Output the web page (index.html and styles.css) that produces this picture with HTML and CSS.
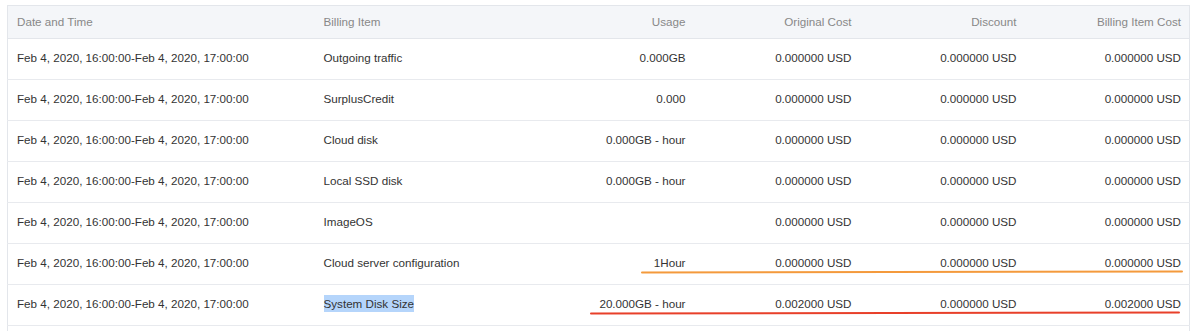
FILE: index.html
```html
<!DOCTYPE html>
<html lang="en">
<head>
    <meta charset="UTF-8">
    <title>Billing Details</title>
    <link rel="stylesheet" href="styles.css">
</head>
<body>
    <div class="bill-wrap">
        <table class="bill-table">
            <colgroup>
                <col class="c-date">
                <col class="c-item">
                <col class="c-usage">
                <col class="c-orig">
                <col class="c-disc">
                <col class="c-cost">
            </colgroup>
            <thead>
                <tr>
                    <th>Date and Time</th>
                    <th>Billing Item</th>
                    <th class="num">Usage</th>
                    <th class="num">Original Cost</th>
                    <th class="num">Discount</th>
                    <th class="num">Billing Item Cost</th>
                </tr>
            </thead>
            <tbody>
                <tr>
                    <td>Feb 4, 2020, 16:00:00-Feb 4, 2020, 17:00:00</td>
                    <td>Outgoing traffic</td>
                    <td class="num">0.000GB</td>
                    <td class="num">0.000000 USD</td>
                    <td class="num">0.000000 USD</td>
                    <td class="num">0.000000 USD</td>
                </tr>
                <tr>
                    <td>Feb 4, 2020, 16:00:00-Feb 4, 2020, 17:00:00</td>
                    <td>SurplusCredit</td>
                    <td class="num">0.000</td>
                    <td class="num">0.000000 USD</td>
                    <td class="num">0.000000 USD</td>
                    <td class="num">0.000000 USD</td>
                </tr>
                <tr>
                    <td>Feb 4, 2020, 16:00:00-Feb 4, 2020, 17:00:00</td>
                    <td>Cloud disk</td>
                    <td class="num">0.000GB - hour</td>
                    <td class="num">0.000000 USD</td>
                    <td class="num">0.000000 USD</td>
                    <td class="num">0.000000 USD</td>
                </tr>
                <tr>
                    <td>Feb 4, 2020, 16:00:00-Feb 4, 2020, 17:00:00</td>
                    <td>Local SSD disk</td>
                    <td class="num">0.000GB - hour</td>
                    <td class="num">0.000000 USD</td>
                    <td class="num">0.000000 USD</td>
                    <td class="num">0.000000 USD</td>
                </tr>
                <tr>
                    <td>Feb 4, 2020, 16:00:00-Feb 4, 2020, 17:00:00</td>
                    <td>ImageOS</td>
                    <td class="num"></td>
                    <td class="num">0.000000 USD</td>
                    <td class="num">0.000000 USD</td>
                    <td class="num">0.000000 USD</td>
                </tr>
                <tr>
                    <td>Feb 4, 2020, 16:00:00-Feb 4, 2020, 17:00:00</td>
                    <td>Cloud server configuration</td>
                    <td class="num">1Hour</td>
                    <td class="num">0.000000 USD</td>
                    <td class="num">0.000000 USD</td>
                    <td class="num">0.000000 USD</td>
                </tr>
                <tr>
                    <td>Feb 4, 2020, 16:00:00-Feb 4, 2020, 17:00:00</td>
                    <td><span class="selected">System Disk Size</span></td>
                    <td class="num">20.000GB - hour</td>
                    <td class="num">0.002000 USD</td>
                    <td class="num">0.000000 USD</td>
                    <td class="num">0.002000 USD</td>
                </tr>
                <tr class="row-cut">
                    <td></td><td></td><td></td><td></td><td></td><td></td>
                </tr>
            </tbody>
        </table>

        <!-- hand-drawn marks over the screenshot -->
        <div class="mark mark-orange"></div>
        <div class="mark mark-red"></div>
    </div>
</body>
</html>
```

FILE: styles.css
```css
body {
    margin: 0;
    background: #ffffff;
    font-family: "Liberation Sans", Arial, sans-serif;
    font-size: 11.65px;
    color: #333333;
    overflow: hidden;
}
.bill-wrap {
    position: relative;
    padding: 5px 11px 0 7px;
}
.bill-table {
    width: 1182px;
    border-collapse: collapse;
    table-layout: fixed;
    border-left: 1px solid #e3e6eb;
    border-right: 1px solid #e3e6eb;
}
.c-date { width: 307px; }
.c-item { width: 216px; }
.c-usage { width: 165px; }
.c-orig { width: 166px; }
.c-disc { width: 165px; }
.c-cost { width: 163px; }
.bill-table th {
    background: #f4f6f9;
    color: #888888;
    font-weight: normal;
    text-align: left;
    height: 31px;
    padding: 0 9px 1px;
    border-top: 1px solid #e3e6eb;
    border-bottom: 1px solid #e3e6eb;
}
.bill-table td {
    height: 37px;
    padding: 0 9px 3px;
    border-bottom: 1px solid #e8eaee;
    white-space: nowrap;
}
.bill-table .num {
    text-align: right;
    padding-right: 10px;
}
.bill-table th.num:last-child,
.bill-table td.num:last-child {
    padding-right: 8px;
}
.bill-table .row-cut td {
    height: 5px;
    padding: 0;
    border-bottom: none;
}
.selected {
    background: #b5d5fb;
    padding: 2px 0;
}
.mark {
    position: absolute;
    height: 2px;
    border-radius: 2px;
}
.mark-orange {
    left: 641px;
    top: 271px;
    width: 542px;
    background: #f49a3c;
    transform: rotate(-0.1deg);
}
.mark-red {
    left: 590px;
    top: 312px;
    width: 590px;
    background: #e8402a;
    transform: rotate(-0.1deg);
}
```
